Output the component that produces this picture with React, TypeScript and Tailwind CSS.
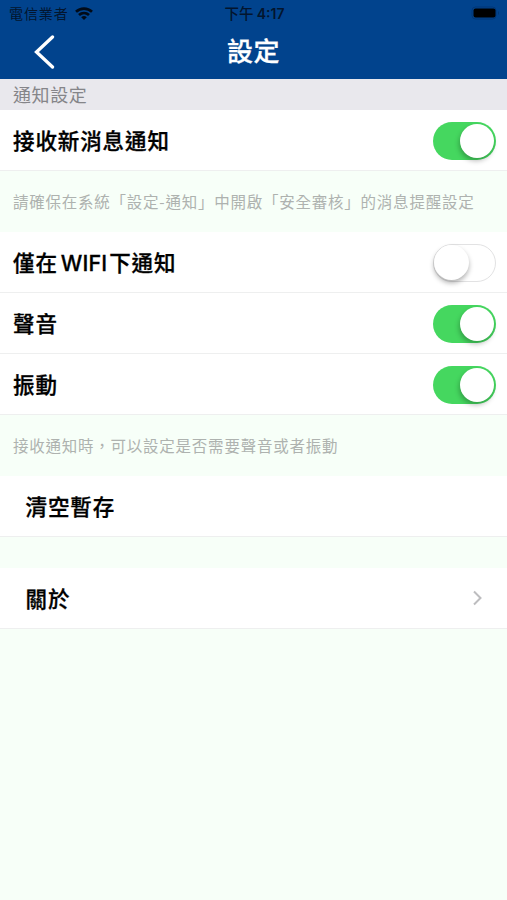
import type { ReactNode } from "react";

function Toggle({ on = false }: { on?: boolean }) {
  return (
    <span
      role="switch"
      aria-checked={on}
      className={
        on
          ? "mt-px flex h-[38px] w-[63px] shrink-0 items-center justify-end rounded-full bg-[#45d75f] pr-[2px]"
          : "mt-px flex h-[38px] w-[63px] shrink-0 items-center justify-start rounded-full border-[1.5px] border-[#e2e2e3] bg-white"
      }
    >
      <span
        className={
          on
            ? "size-[34px] rounded-full bg-white shadow-[-1px_3px_5px_rgba(0,0,0,0.26)]"
            : "size-[35px] rounded-full bg-white shadow-[0_3px_5px_rgba(0,0,0,0.3)]"
        }
      />
    </span>
  );
}

function Row({ label, children, inset = false }: { label: ReactNode; children?: ReactNode; inset?: boolean }) {
  return (
    <div
      className={
        inset
          ? "flex h-[61px] items-center justify-between border-b border-[#eeefef] bg-white pr-6 pl-[25.5px]"
          : "flex h-[61px] items-center justify-between border-b border-[#eeefef] bg-white pr-[11.5px] pl-[13px]"
      }
    >
      <span className="text-[21.5px] leading-[30px] font-medium tracking-[0.9px] whitespace-nowrap text-black [-webkit-text-stroke:0.3px_black]">
        {label}
      </span>
      {children}
    </div>
  );
}

function Note({ children }: { children: ReactNode }) {
  return (
    <p className="flex h-[61px] items-center pl-[13px] text-[15.5px] whitespace-nowrap tracking-[0.76px] text-[#aeb2af]">
      {children}
    </p>
  );
}

export default function App() {
  return (
    <div
      lang="zh-Hant"
      className="flex h-[900px] w-[507px] flex-col overflow-hidden bg-[#f7fff8] font-['Noto_Sans_CJK_TC',sans-serif]"
    >
      <header className="h-[79px] shrink-0 bg-[#01438d] text-white">
        <div className="grid h-[26px] grid-cols-3 items-center pr-[7px] pl-[9px] text-[14px] leading-5 text-[#03152e]">
          <div className="flex items-center gap-[6px]">
            <span className="tracking-[0.9px]">電信業者</span>
            <svg width="18" height="13" viewBox="0 0 18 13" fill="none" stroke="#020b18" strokeWidth="2.7">
              <path d="M1 4.7C5.5.5 12.5.5 17 4.7" />
              <path d="M4 8c2.9-2.6 7.1-2.6 10 0" />
              <path d="M9 13 6.2 10.2q2.8-2.2 5.6 0Z" fill="#020b18" stroke="none" />
            </svg>
          </div>
          <div className="text-center text-[14.5px] font-medium whitespace-nowrap">
            下午 <span className="font-['Inter','Noto_Sans_CJK_TC',sans-serif] text-[14px] font-semibold">4:17</span>
          </div>
          <svg className="justify-self-end" width="29" height="14" viewBox="0 0 29 14">
            <rect x="1" y="1" width="24" height="12" rx="3.5" fill="none" stroke="#023776" />
            <rect x="2.5" y="2.5" width="22" height="9" rx="2" fill="#000" />
            <path d="M27 5q2 2 0 4Z" fill="#023776" />
          </svg>
        </div>
        <div className="grid h-[50px] grid-cols-3 items-center">
          <svg className="mt-[2px] ml-[34px]" width="22" height="34" viewBox="0 0 22 34" fill="none">
            <path d="M18.5 2 2.5 17l16 15" stroke="white" strokeWidth="3.3" strokeLinecap="round" />
          </svg>
          <h1 className="-mt-[2px] text-center text-[26px] leading-[36px] font-medium tracking-[0.5px] [-webkit-text-stroke:0.3px_white]">
            設定
          </h1>
        </div>
      </header>
      <h2 className="flex h-[31px] shrink-0 items-center bg-[#e9e8ed] pl-[13px] text-[18px] tracking-[0.6px] text-[#858589]">
        通知設定
      </h2>
      <main>
        <Row label="接收新消息通知"><Toggle on /></Row>
        <Note>請確保在系統「設定-通知」中開啟「安全審核」的消息提醒設定</Note>
        <Row label={<>僅在<span className="mr-[2px] ml-[3px] font-['Inter'] text-[21.5px] tracking-[0.1px]">WIFI</span>下通知</>}><Toggle /></Row>
        <Row label="聲音"><Toggle on /></Row>
        <Row label="振動"><Toggle on /></Row>
        <Note>接收通知時，可以設定是否需要聲音或者振動</Note>
        <Row label="清空暫存" inset />
        <div className="h-[31px]" />
        <Row label="關於" inset>
          <svg width="11" height="16" viewBox="0 0 11 16" fill="none">
            <path d="m2 1.5 6.5 6.5L2 14.5" stroke="#bdbdbf" strokeWidth="2" />
          </svg>
        </Row>
      </main>
    </div>
  );
}
